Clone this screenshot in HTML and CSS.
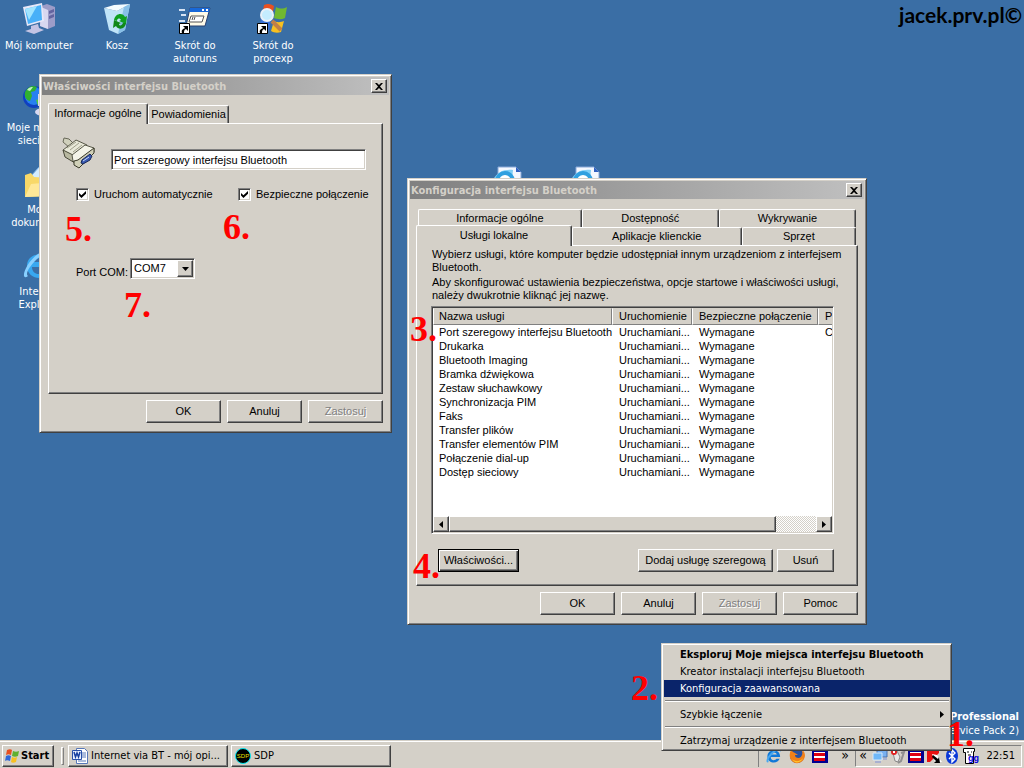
FILE: index.html
```
<!DOCTYPE html>
<html lang="pl">

<head>
  <meta charset="utf-8">
  <title>Konfiguracja interfejsu Bluetooth</title>
  <link rel="stylesheet" href="styles.css">
</head>

<body>
  <div id="desktop">
    <div class="watermark">jacek.prv.pl&copy;</div>

    <div class="icons">
      <div class="icon">
        <svg width="34" height="34" viewBox="0 0 34 34">
          <path d="M19 4l6-2 8 3v19l-7 3-8-3z" fill="#9c9cc8"/>
          <path d="M19 5l7 3v19l-8-3z" fill="#d8d8f0"/>
          <path d="M27 9l5-2v3l-5 2zM27 14l5-2v3l-5 2z" fill="#6464a0"/>
          <path d="M1 5l19-4 2 18-17 5z" fill="#e8e8f8"/>
          <path d="M3 7l16-4 1 15-14 4z" fill="#48b0f8"/>
          <path d="M3 7l12-3-8 14z" fill="#a0e4ff"/>
          <path d="M9 24l7-2 1 4 5 2-10 4-9-3 6-2z" fill="#c4c4e4"/>
        </svg>
        <span>Mój komputer</span>
      </div>
      <div class="icon">
        <svg width="34" height="34" viewBox="0 0 34 34">
          <path d="M4 6l13 3 13-7-5 26-7 4-9-4z" fill="#c0e4f8"/>
          <path d="M4 6l10-3 16-1-13 7z" fill="#f4fcff"/>
          <path d="M24 5l6-3-5 26-7 4z" fill="#88c0e8"/>
          <path d="M14 18c1-7 9-8 11-3l2-1-1 8-7-3 2-1c-2-3-4-1-4 1z" fill="#10a020"/>
          <path d="M26 21c-1 7-8 7-10 3l-3 2 1-8 7 3-2 1c1 3 3 1 4-1z" fill="#108818"/>
        </svg>
        <span>Kosz</span>
      </div>
      <div class="icon">
        <svg width="34" height="34" viewBox="0 0 34 34">
          <path d="M1 8h6M3 13h5M1 19h6M3 24h4" stroke="#d8e4f4" stroke-width="2"/>
          <path d="M12 6h20l-5 18H8z" fill="#fffbe8" stroke="#284070"/>
          <path d="M12 6h20l-1 4H11z" fill="#1868d8"/>
          <path d="M24 7h2v2h-2zM28 7h2v2h-2z" fill="#fff"/>
          <path d="M13 14h13l-2 6H11z" fill="#fff" stroke="#555"/>
          <path d="M14 18l1-3M16 18l1-3" stroke="#555"/>
          <path d="M1.500 21.500h10v10h-10z" fill="#fff" stroke="#000"/>
          <path d="M5 24h5v5l-2-2c-2 1-2 2-2 4H4c-1-3 1-4 3-5z"/>
        </svg>
        <span>Skrót do autoruns</span>
      </div>
      <div class="icon">
        <svg width="34" height="34" viewBox="0 0 34 34">
          <path d="M8 3c4-2 7-1 10 1l-2 11c-3-2-7-3-10-1z" fill="#e85020"/>
          <path d="M20 5c4 2 7 2 11 0l-2 11c-4 2-8 1-11 0z" fill="#70b830"/>
          <path d="M5 17c4-2 8-1 10 1l-2 11c-3-2-6-2-10-1z" fill="#3870d8"/>
          <path d="M18 19c4 2 7 1 10 0l-3 11c-3 1-7 1-10-1z" fill="#f8c020"/>
          <path d="M16 19l9 9" stroke="#c08048" stroke-width="4"/>
          <circle cx="11" cy="13" r="6" fill="#c4ecff" stroke="#e8f0f8" stroke-width="2"/>
          <path d="M1.500 21.500h10v10h-10z" fill="#fff" stroke="#000"/>
          <path d="M5 24h5v5l-2-2c-2 1-2 2-2 4H4c-1-3 1-4 3-5z"/>
        </svg>
        <span>Skrót do procexp</span>
      </div>
      <div class="icon network">
        <svg width="34" height="34" viewBox="0 0 34 34">
          <circle cx="12" cy="13" r="11" fill="#1040c0"/>
          <circle cx="12" cy="12" r="9" fill="#2880f0"/>
          <path d="M3 8c3-6 8-7 12-5l-2 4-4 1 1 4-2 5c-4-1-6-4-5-9z" fill="#30b030"/>
          <path d="M14 16l6-2 1 5-5 3z" fill="#50c840"/>
          <path d="M5 6c2-3 4-3 6-3L8 7z" fill="#c0f0c0"/>
          <path d="M16 10h14v12H16z" fill="#d8d8f0"/>
          <ellipse cx="21" cy="28" rx="8" ry="4" fill="#d8d8f0"/>
        </svg>
        <span>Moje miejsca sieciowe</span>
      </div>
      <div class="icon documents">
        <svg width="34" height="34" viewBox="0 0 34 34">
          <path d="M9 10l8-9 12 4-4 20-14-2z" fill="#d4ecff" stroke="#70a8e0"/>
          <path d="M3 9l6-2 3 4 16 1-1 18-24 1z" fill="#f8d868"/>
          <path d="M3 31l6-13 22-2-4 14z" fill="#ffe898"/>
        </svg>
        <span>Moje dokumenty</span>
      </div>
      <div class="icon explorer">
        <svg width="34" height="34" viewBox="0 0 34 34">
          <path d="M28 19H10c0 8 9 9 12 4h6c-4 11-23 9-23-5 0-15 23-16 23 1zM22 14c-1-5-10-5-12 0z" fill="#38a8f0" fill-rule="evenodd"/>
          <path d="M6 28C-2 34 2 16 16 6 30-3 32 4 28 9c1-8-8-3-14 3C7 19 3 26 6 28z" fill="#88d0ff"/>
        </svg>
        <span>Internet Explorer</span>
      </div>
      <div class="icon page1">
        <svg width="34" height="34" viewBox="0 0 34 34">
          <path d="M8 1h18l5 5v27H8z" fill="#f4f8ff" stroke="#88a8d8"/>
          <path d="M26 1v5h5z" fill="#3060c0"/>
          <path d="M3 14C7 6 14 3 23 4l-1 10z" fill="#80d0f8"/>
          <circle cx="15" cy="15" r="8" fill="#fff" stroke="#30a0e0" stroke-width="4"/>
        </svg>
      </div>
      <div class="icon page2">
        <svg width="34" height="34" viewBox="0 0 34 34">
          <path d="M8 1h18l5 5v27H8z" fill="#f4f8ff" stroke="#88a8d8"/>
          <path d="M26 1v5h5z" fill="#3060c0"/>
          <path d="M3 14C7 6 14 3 23 4l-1 10z" fill="#80d0f8"/>
          <circle cx="15" cy="15" r="8" fill="#fff" stroke="#30a0e0" stroke-width="4"/>
        </svg>
      </div>
    </div>

    <div class="version">
      <b>Windows XP Professional</b><br>
      (Service Pack 2)
    </div>

    <!-- Serial port properties -->
    <div class="window" id="properties">
      <div class="title">
        <h1>Właściwości interfejsu Bluetooth</h1>
        <button class="close" aria-label="Zamknij"><svg width="8" height="7" viewBox="0 0 8 7"><path d="M0 0h2l2 2 2-2h2L5 3.500 8 7H6L4 5 2 7H0l3-3.500z"/></svg></button>
      </div>
      <div class="content">
        <div class="tabs">
          <button class="tab selected">Informacje ogólne</button>
          <button class="tab">Powiadomienia</button>
        </div>
        <div class="panel">
          <div class="name">
            <svg width="34" height="34" viewBox="0 0 34 34">
              <path d="M2 2l5 1 5 5-4 4-7-6z" fill="#d0d0bc" stroke="#686858"/>
              <path d="M1 14L14 4l11 5-3 8-12 7z" fill="#e8e8d8" stroke="#585848"/>
              <path d="M1 14l10 5 2 8-10-6z" fill="#b8b8a0" stroke="#484838"/>
              <path d="M5 12l9-6M8 14l9-7M11 16l9-7" stroke="#a0a08c"/>
              <path d="M10 19l13-10 9 3v4L16 28l-5-3z" fill="#f4f4e8" stroke="#585848"/>
              <path d="M16 24l16-12v5L17 32l-5-3v-4z" fill="#d0d0b8" stroke="#383828"/>
              <path d="M20 24l8-6 2 2-2 4-7 4-2-1z" fill="#3858b0" stroke="#182858"/>
              <path d="M21 25l6-4" stroke="#c8d8f8"/>
            </svg>
            <input type="text" class="field" aria-label="Nazwa usługi" value="Port szeregowy interfejsu Bluetooth">
          </div>
          <div class="options">
            <label><input type="checkbox" checked>Uruchom automatycznie</label>
            <label><input type="checkbox" checked>Bezpieczne połączenie</label>
          </div>
          <div class="port">
            <label for="port">Port COM:</label>
            <div class="combo">
              <select id="port"><option>COM7</option></select>
              <span class="arrow"><svg width="7" height="4" viewBox="0 0 7 4"><path d="M0 0h7L3.500 4z"/></svg></span>
            </div>
          </div>
        </div>
        <div class="buttons">
          <button>OK</button>
          <button>Anuluj</button>
          <button disabled>Zastosuj</button>
        </div>
      </div>
    </div>

    <!-- Bluetooth configuration -->
    <div class="window" id="config">
      <div class="title">
        <h1>Konfiguracja interfejsu Bluetooth</h1>
        <button class="close" aria-label="Zamknij"><svg width="8" height="7" viewBox="0 0 8 7"><path d="M0 0h2l2 2 2-2h2L5 3.500 8 7H6L4 5 2 7H0l3-3.500z"/></svg></button>
      </div>
      <div class="content">
        <div class="tabs back">
          <button class="tab">Informacje ogólne</button>
          <button class="tab">Dostępność</button>
          <button class="tab">Wykrywanie</button>
        </div>
        <div class="tabs front">
          <button class="tab selected">Usługi lokalne</button>
          <button class="tab">Aplikacje klienckie</button>
          <button class="tab">Sprzęt</button>
        </div>
        <div class="panel">
          <p>Wybierz usługi, które komputer będzie udostępniał innym urządzeniom z interfejsem<br>Bluetooth.</p>
          <p>Aby skonfigurować ustawienia bezpieczeństwa, opcje startowe i właściwości usługi,<br>należy dwukrotnie kliknąć jej nazwę.</p>
          <div class="list">
            <div class="rows">
              <table>
                <colgroup><col class="c1"><col class="c2"><col class="c3"><col class="c4"></colgroup>
                <thead>
                  <tr><th>Nazwa usługi</th><th>Uruchomienie</th><th>Bezpieczne połączenie</th><th>Port COM</th></tr>
                </thead>
                <tbody>
                  <tr><td>Port szeregowy interfejsu Bluetooth</td><td>Uruchamiani...</td><td>Wymagane</td><td>COM7</td></tr>
                  <tr><td>Drukarka</td><td>Uruchamiani...</td><td>Wymagane</td><td></td></tr>
                  <tr><td>Bluetooth Imaging</td><td>Uruchamiani...</td><td>Wymagane</td><td></td></tr>
                  <tr><td>Bramka dźwiękowa</td><td>Uruchamiani...</td><td>Wymagane</td><td></td></tr>
                  <tr><td>Zestaw słuchawkowy</td><td>Uruchamiani...</td><td>Wymagane</td><td></td></tr>
                  <tr><td>Synchronizacja PIM</td><td>Uruchamiani...</td><td>Wymagane</td><td></td></tr>
                  <tr><td>Faks</td><td>Uruchamiani...</td><td>Wymagane</td><td></td></tr>
                  <tr><td>Transfer plików</td><td>Uruchamiani...</td><td>Wymagane</td><td></td></tr>
                  <tr><td>Transfer elementów PIM</td><td>Uruchamiani...</td><td>Wymagane</td><td></td></tr>
                  <tr><td>Połączenie dial-up</td><td>Uruchamiani...</td><td>Wymagane</td><td></td></tr>
                  <tr><td>Dostęp sieciowy</td><td>Uruchamiani...</td><td>Wymagane</td><td></td></tr>
                </tbody>
              </table>
            </div>
            <div class="scrollbar">
              <button aria-label="W lewo"><svg width="4" height="7" viewBox="0 0 4 7"><path d="M4 0v7L0 3.500z"/></svg></button>
              <div class="thumb"></div>
              <div class="track"></div>
              <button aria-label="W prawo"><svg width="4" height="7" viewBox="0 0 4 7"><path d="M0 0v7l4-3.500z"/></svg></button>
            </div>
          </div>
          <div class="actions">
            <button class="default">Właściwości...</button>
            <button class="add">Dodaj usługę szeregową</button>
            <button class="remove">Usuń</button>
          </div>
        </div>
        <div class="buttons">
          <button>OK</button>
          <button>Anuluj</button>
          <button disabled>Zastosuj</button>
          <button>Pomoc</button>
        </div>
      </div>
    </div>
  </div>

  <div id="taskbar">
    <button class="start">
      <svg width="16" height="16" viewBox="0 0 16 16">
        <path d="M3 2c2-1 4-1 5 0L7 7C5 6 4 6 2 7z" fill="#e85020"/>
        <path d="M9 3c2 1 4 1 6 0l-1 5c-2 1-4 1-6 0z" fill="#60b030"/>
        <path d="M2 8c2-1 3-1 5 0l-1 5c-2-1-4-1-5 0z" fill="#3068d8"/>
        <path d="M8 9c2 1 3 1 5 0l-1 5c-2 1-4 1-5 0z" fill="#f8c020"/>
      </svg>
      Start
    </button>
    <span class="grip"></span>
    <button class="task">
      <svg width="16" height="16" viewBox="0 0 16 16">
        <path d="M4.500.5h8l3 3v12h-11z" fill="#fff" stroke="#5878b8"/>
        <path d="M10 5h4M10 7h4M10 9h4M6 13h8" stroke="#5878b8"/>
        <path d="M.5 2.500h9v9h-9z" fill="#e8f0ff" stroke="#2850a8"/>
        <path d="M2 4l1.500 5L5 5l1.500 4L8 4" fill="none" stroke="#1840a0" stroke-width="1.500"/>
      </svg>
      Internet via BT - mój opi...
    </button>
    <button class="task">
      <svg width="16" height="16" viewBox="0 0 16 16">
        <circle cx="8" cy="8" r="7.500" fill="#000" stroke="#00e8f0"/>
        <text x="8" y="10" text-anchor="middle" class="sdp">SDP</text>
      </svg>
      SDP
    </button>
    <div class="quick">
      <svg width="16" height="16" viewBox="0 0 34 34">
        <path d="M30 19H10c0 8 9 9 12 4h7c-4 12-26 10-26-5 0-17 27-18 27 1zM23 14c-1-6-11-6-13 0z" fill="#1078d8" fill-rule="evenodd"/>
        <path d="M6 30C-4 34 2 16 16 6 30-3 34 4 30 9c1-8-9-3-15 3C7 19 3 26 6 30z" fill="#48a8f0"/>
      </svg>
      <svg width="16" height="16" viewBox="0 0 16 16">
        <circle cx="8" cy="8" r="7" fill="#2850a0"/>
        <path d="M2 2c-2 4-2 9 2 12 5 3 11 0 12-6 0-3-1-5-3-6 1 4 0 7-3 8-3 0-4-1-4-3h3L6 5 4 4z" fill="#f08018"/>
        <path d="M3 11c3 3 8 3 11-1-1 4-8 7-11 1z" fill="#ffc830"/>
      </svg>
      <svg width="16" height="16" viewBox="0 0 16 16">
        <path d="M0 2h15l1 1v12H0z" fill="#000090"/>
        <path d="M2 4h11v9H2z" fill="#fff"/>
        <path d="M2 5h11v3H2zM2 10h11v3H2z" fill="#e00010"/>
      </svg>
      <span class="more">»</span>
    </div>
    <div class="tray">
      <span class="more">«</span>
      <svg width="16" height="16" viewBox="0 0 16 16">
        <path d="M5 1h10v8H5z" fill="#78b0f0" stroke="#4870b0"/>
        <path d="M1 5h9v7H1z" fill="#70b8f8" stroke="#d8e8f8"/>
        <path d="M3 13h6v2H3zM11 10h4v2h-4z" fill="#a8b0d0"/>
      </svg>
      <svg width="16" height="16" viewBox="0 0 16 16">
        <path d="M3 5l4-2 3 6-2 5-3-1z" fill="#e8e8e8" stroke="#888"/>
        <path d="M11 5l3-1-3 9-3 2" fill="none" stroke="#909090" stroke-width="2"/>
        <circle cx="4" cy="4" r="3" fill="#e02020"/>
        <path d="M3 3l2 2M5 3L3 5" stroke="#fff"/>
      </svg>
      <svg width="16" height="16" viewBox="0 0 16 16">
        <path d="M0 2h15l1 1v12H0z" fill="#000090"/>
        <path d="M2 4h11v9H2z" fill="#fff"/>
        <path d="M2 5h11v3H2zM2 10h11v3H2z" fill="#e00010"/>
      </svg>
      <svg width="16" height="16" viewBox="0 0 16 16">
        <path d="M1 2h12v3L4 14H1z" fill="#e81010"/>
        <path d="M6 6l5 1 5 7H9z" fill="#fff"/>
        <path d="M7 7l5 4 1-2 1 6H8l2-2-4-4z"/>
      </svg>
      <svg width="16" height="16" viewBox="0 0 16 16">
        <ellipse cx="8" cy="8" rx="6" ry="8" fill="#0838d8"/>
        <path d="M5 5l6 6-3 3V2l3 3-6 6" fill="none" stroke="#fff" stroke-width="1.400"/>
      </svg>
      <svg width="18" height="16" viewBox="0 0 18 16">
        <path d="M1.500.5h11v3h-1v12h-8v-11h-2z" fill="#fff" stroke="#000"/>
        <path d="M5 4h2M9 4h1M6 7h3" stroke="#000"/>
        <text x="6" y="13" class="gg">gg</text>
      </svg>
      <span class="clock">22:51</span>
    </div>
  </div>

  <div class="menu">
    <button class="item bold">Eksploruj Moje miejsca interfejsu Bluetooth</button>
    <button class="item">Kreator instalacji interfejsu Bluetooth</button>
    <button class="item active">Konfiguracja zaawansowana</button>
    <hr>
    <button class="item">Szybkie łączenie <svg width="4" height="7" viewBox="0 0 4 7"><path d="M0 0v7l4-3.500z"/></svg></button>
    <hr>
    <button class="item">Zatrzymaj urządzenie z interfejsem Bluetooth</button>
  </div>

  <!-- Step numbers -->
  <div class="step s1">1.</div>
  <div class="step s2">2.</div>
  <div class="step s3">3.</div>
  <div class="step s4">4.</div>
  <div class="step s5">5.</div>
  <div class="step s6">6.</div>
  <div class="step s7">7.</div>
</body>
</html>
```
FILE: styles.css
```
* {
  box-sizing: border-box;
}
html {
  height: 100%;
}
body {
  display: flex;
  flex-direction: column;
  position: relative;
  height: 100%;
  margin: 0;
  overflow: hidden;
  background-color: #3a6ea5;
  color: #000;
  font-family: "Liberation Sans", Arial, sans-serif;
  font-size: 11px;
  line-height: 13px;
}
svg {
  display: block;
  flex: none;
}
button {
  padding: 0;
  border: 1px solid;
  border-color: #fff #404040 #404040 #fff;
  box-shadow: inset -1px -1px #808080;
  background-color: #d4d0c8;
  color: #000;
  font: inherit;
  white-space: nowrap;
}
button:disabled {
  color: #808080;
  text-shadow: 1px 1px #fff;
}

/* Desktop */
#desktop {
  position: relative;
  flex: 1;
}
.icons {
  display: grid;
  grid-template-columns: repeat(8, 78px);
  grid-auto-rows: 82px;
}
.icon {
  display: flex;
  flex-direction: column;
  align-items: center;
  gap: 3px;
  padding-top: 2px;
  color: #fff;
  font-family: Tahoma, "DejaVu Sans Condensed", "DejaVu Sans", sans-serif;
  font-size: 11px;
  text-align: center;
}
.icon span {
  max-width: 76px;
}
.network { grid-area: 2 / 1; }
.documents { grid-area: 3 / 1; }
.explorer { grid-area: 4 / 1; }
.page1 { grid-area: 3 / 7; }
.page2 { grid-area: 3 / 8; }
.watermark {
  position: absolute;
  top: 4px;
  right: 2px;
  font: bold 21px/22px "Comic Sans MS", Lato, sans-serif;
}
.version {
  position: absolute;
  right: 5px;
  bottom: 2px;
  color: #fff;
  font-family: Tahoma, "DejaVu Sans Condensed", "DejaVu Sans", sans-serif;
  line-height: 14px;
  text-align: right;
}

/* Windows */
.window {
  position: absolute;
  padding: 2px;
  border: 1px solid;
  border-color: #d4d0c8 #404040 #404040 #d4d0c8;
  box-shadow: inset 1px 1px #fff, inset -1px -1px #808080;
  background-color: #d4d0c8;
}
#properties {
  top: 74px;
  left: 39px;
  width: 353px;
}
#config {
  top: 178px;
  left: 407px;
  width: 460px;
}
.title {
  display: flex;
  align-items: center;
  justify-content: space-between;
  height: 18px;
  padding: 0 2px 0 1px;
  background: linear-gradient(to right, #808080, #c0c0c0);
}
.title h1 {
  margin: 0;
  color: #d4d0c8;
  font: bold 11px/13px Tahoma, "DejaVu Sans Condensed", "DejaVu Sans", sans-serif;
}
.close {
  display: flex;
  align-items: center;
  justify-content: center;
  width: 16px;
  height: 14px;
}
.content {
  padding: 10px 6px 7px;
}
.tabs {
  display: flex;
  height: 18px;
  padding: 0 2px;
}
.tab {
  flex: none;
  height: 18px;
  border-bottom: 0;
  border-radius: 2px 2px 0 0;
  box-shadow: inset -1px 0 #808080;
}
.tab.selected {
  position: relative;
  z-index: 1;
  height: 21px;
  margin: -2px 0 0 -2px;
  padding-bottom: 2px;
}
#properties .tab {
  width: 81px;
}
#properties .tab.selected {
  width: 100px;
}
.back .tab {
  flex: 137 0 0;
}
.back .tab:first-child {
  flex-grow: 164;
}
.front .tab {
  flex: 114 0 0;
}
.front .tab:nth-child(2) {
  flex-grow: 170;
}
.front .tab.selected {
  flex-grow: 156;
}
.panel {
  border: 1px solid;
  border-color: #fff #404040 #404040 #fff;
  box-shadow: inset -1px -1px #808080;
}
.buttons {
  display: flex;
  justify-content: flex-end;
  gap: 6px;
  margin-top: 6px;
}
.buttons button {
  width: 75px;
  height: 23px;
}

/* Serial port properties */
#properties .panel {
  min-height: 271px;
  padding: 12px 16px 0 13px;
}
.name {
  display: flex;
  align-items: flex-end;
  gap: 15px;
}
.field, .combo {
  border: 1px solid;
  border-color: #808080 #fff #fff #808080;
  box-shadow: inset 1px 1px #404040, inset -1px -1px #d4d0c8;
  background-color: #fff;
}
.field {
  flex: 1;
  min-width: 0;
  height: 21px;
  padding: 1px 2px;
  font: inherit;
}
.options {
  display: grid;
  grid-template-columns: 162px 1fr;
  margin: 18px 0 57px 14px;
}
.options label {
  display: flex;
  align-items: center;
  gap: 5px;
  white-space: nowrap;
}
.options input {
  appearance: none;
  width: 13px;
  height: 13px;
  margin: 0;
  border: 1px solid;
  border-color: #808080 #fff #fff #808080;
  box-shadow: inset 1px 1px #404040, inset -1px -1px #d4d0c8;
  background-color: #fff;
}
.options input:checked::after {
  content: "";
  display: block;
  width: 7px;
  height: 7px;
  margin: 2px;
  background-color: #000;
  clip-path: polygon(0 28%, 35% 62%, 100% 0, 100% 40%, 35% 100%, 0 66%);
}
.port {
  display: flex;
  align-items: flex-end;
  gap: 4px;
  margin-left: 14px;
}
.port label {
  width: 50px;
  white-space: nowrap;
}
.combo {
  display: flex;
  width: 65px;
  height: 21px;
  padding: 1px;
}
.combo select {
  appearance: none;
  flex: 1;
  min-width: 0;
  padding: 0 2px;
  border: 0;
  background: none;
  font: inherit;
}
.arrow {
  display: flex;
  align-items: center;
  justify-content: center;
  width: 16px;
  border: 1px solid;
  border-color: #fff #404040 #404040 #fff;
  box-shadow: inset -1px -1px #808080;
  background-color: #d4d0c8;
}

/* Bluetooth configuration */
#config .panel {
  height: 341px;
  padding: 2px 23px 0 14px;
}
#config p {
  margin: 0 0 2px 1px;
  white-space: nowrap;
}
.list {
  margin-top: 4px;
  border: 1px solid;
  border-color: #808080 #fff #fff #808080;
  box-shadow: inset 1px 1px #404040, inset -1px -1px #d4d0c8;
  padding: 1px;
}
.rows {
  height: 208px;
  overflow: hidden;
  background-color: #fff;
}
table {
  width: 460px;
  border-collapse: separate;
  border-spacing: 0;
  table-layout: fixed;
}
.c1 { width: 179px; }
.c2 { width: 80px; }
.c3 { width: 126px; }
.c4 { width: 75px; }
th {
  height: 17px;
  padding: 0 6px;
  border: 1px solid;
  border-color: #d4d0c8 #808080 #808080 #fff;
  background-color: #d4d0c8;
  font-weight: normal;
  text-align: left;
  white-space: nowrap;
}
td {
  height: 14px;
  padding: 0 0 0 7px;
  white-space: nowrap;
}
td:first-child {
  padding-left: 6px;
}
th:first-child {
  padding-left: 5px;
}
.scrollbar {
  display: flex;
  height: 16px;
}
.scrollbar button {
  display: flex;
  align-items: center;
  justify-content: center;
  width: 16px;
}
.thumb {
  flex: 326 0 0;
  border: 1px solid;
  border-color: #fff #404040 #404040 #fff;
  box-shadow: inset -1px -1px #808080;
  background-color: #d4d0c8;
}
.track {
  flex: 40 0 0;
  background: repeating-conic-gradient(#fff 0 25%, #d4d0c8 0 50%) 0 0 / 2px 2px;
}
.actions {
  display: flex;
  gap: 4px;
  margin: 15px 0 0 7px;
}
.actions button {
  height: 23px;
}
.actions .default {
  width: 81px;
  margin-right: auto;
  border-color: #000;
  box-shadow: inset 1px 1px #fff, inset -1px -1px #404040, inset -2px -2px #808080;
}
.actions .add {
  width: 135px;
}
.actions .remove {
  width: 57px;
}

/* Taskbar */
#taskbar {
  display: flex;
  align-items: center;
  height: 28px;
  padding: 2px 2px 0;
  border-top: 1px solid #d4d0c8;
  box-shadow: inset 0 1px #fff;
  background-color: #d4d0c8;
  font-family: Tahoma, "DejaVu Sans Condensed", "DejaVu Sans", sans-serif;
}
#taskbar button {
  display: flex;
  align-items: center;
  gap: 3px;
  height: 22px;
  padding: 0 3px;
}
#taskbar .start {
  width: 52px;
  padding: 0 1px;
  gap: 1px;
  font-weight: bold;
}
.grip {
  width: 3px;
  height: 18px;
  margin: 0 4px 0 7px;
  border: 1px solid;
  border-color: #fff #808080 #808080 #fff;
}
#taskbar .task {
  width: 160px;
  margin-right: 3px;
}
.quick {
  display: flex;
  align-items: center;
  gap: 7px;
  height: 22px;
  margin-left: auto;
  padding-left: 7px;
  border-left: 1px solid #808080;
}
.more {
  width: 20px;
  font-size: 14px;
  text-align: center;
}
.tray {
  display: flex;
  align-items: center;
  gap: 2px;
  width: 167px;
  height: 22px;
  padding-right: 6px;
  border: 1px solid;
  border-color: #808080 #fff #fff #808080;
}
.tray .more {
  width: 14px;
}
.clock {
  margin-left: auto;
}
.sdp {
  fill: #e8e000;
  font: 6px "Liberation Sans", sans-serif;
}
.gg {
  fill: #0000e0;
  font: bold 9px "Liberation Sans", sans-serif;
}

/* Context menu */
.menu {
  position: absolute;
  right: 72px;
  bottom: 17px;
  width: 291px;
  padding: 2px 1px 1px 2px;
  border: 1px solid;
  border-color: #d4d0c8 #404040 #404040 #d4d0c8;
  box-shadow: inset 1px 1px #fff, inset -1px -1px #808080;
  background-color: #d4d0c8;
  font-family: Tahoma, "DejaVu Sans Condensed", "DejaVu Sans", sans-serif;
}
.item {
  display: flex;
  align-items: center;
  justify-content: space-between;
  width: 100%;
  height: 17px;
  padding: 0 6px 0 16px;
  border: 0;
  box-shadow: none;
}
.item.bold {
  font-weight: bold;
}
.item.active {
  background-color: #0a246a;
  color: #fff;
}
.menu hr {
  height: 2px;
  margin: 3px 1px 4px;
  border: 0;
  border-top: 1px solid #808080;
  border-bottom: 1px solid #fff;
}

/* Step numbers */
.step {
  position: absolute;
  color: #f00;
  font: bold 36px/36px "Liberation Serif", "Times New Roman", serif;
}
.s1 { right: 50px; bottom: 16px; }
.s2 { right: 366px; bottom: 62px; }
.s3 { left: 410px; top: 311px; }
.s4 { left: 413px; top: 548px; }
.s5 { left: 65px; top: 211px; }
.s6 { left: 223px; top: 209px; }
.s7 { left: 124px; top: 287px; }
```
